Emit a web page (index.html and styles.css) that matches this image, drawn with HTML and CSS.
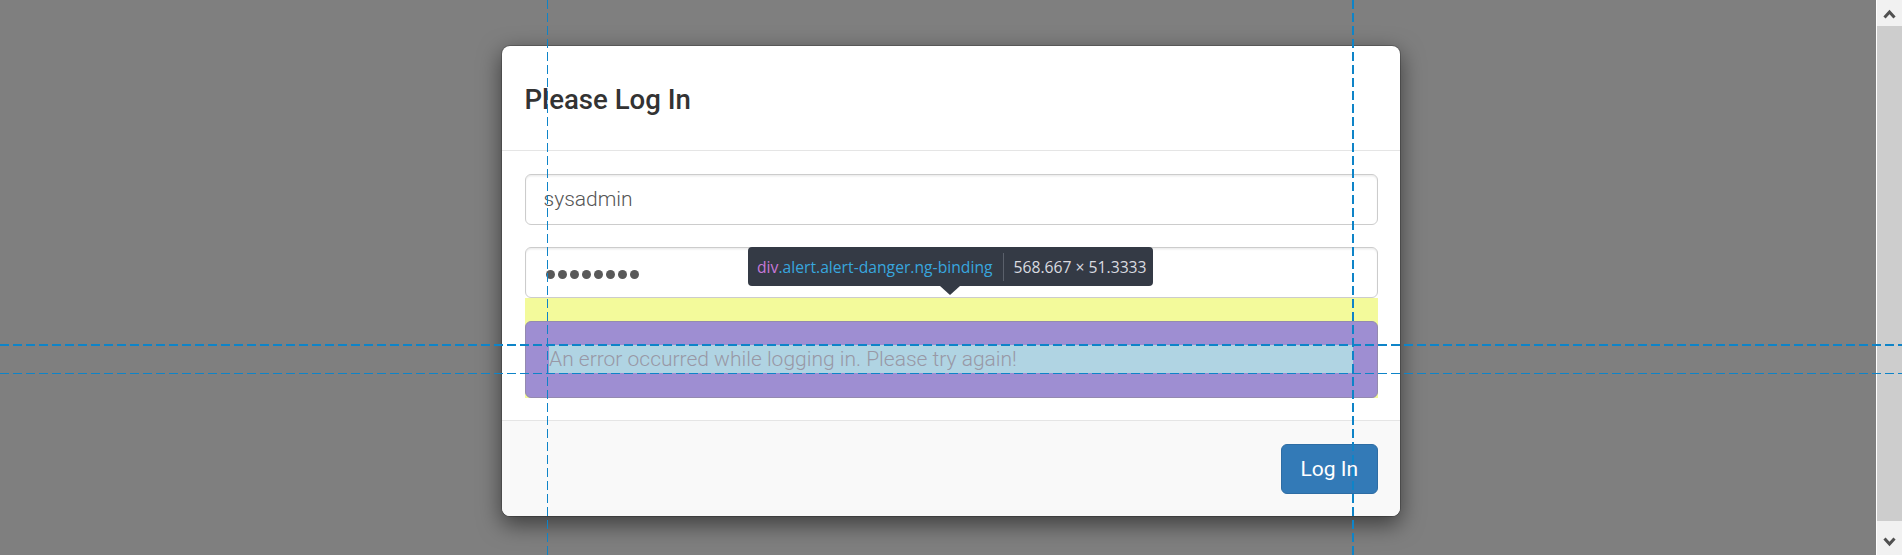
FILE: index.html
```html
<!DOCTYPE html>
<html lang="en">
<head>
<meta charset="utf-8">
<title>Please Log In</title>
<link rel="stylesheet" href="styles.css">
</head>
<body>
<div class="screen">
  <div class="viewport">
    <div class="modal">
      <div class="modal-header">
        <h4 class="modal-title">Please Log In</h4>
      </div>
      <div class="modal-body">
        <input class="form-control" type="text" value="sysadmin">
        <div class="form-control pw">
          <span class="dot"></span><span class="dot"></span><span class="dot"></span><span class="dot"></span><span class="dot"></span><span class="dot"></span><span class="dot"></span><span class="dot"></span>
        </div>
        <div class="alert-margin">
          <div class="alert">
            <div class="alert-content">An error occurred while logging in. Please try again!</div>
          </div>
        </div>
      </div>
      <div class="modal-footer">
        <button class="btn" type="button">Log In</button>
      </div>
    </div>
  </div>
  <div class="scrollbar">
    <div class="sb-btn sb-up">
      <svg width="25" height="26" viewBox="0 0 25 26"><polyline points="7.5,17.5 12.5,12 17.5,17.5" fill="none" stroke="#505050" stroke-width="3"/></svg>
    </div>
    <div class="sb-thumb"></div>
    <div class="sb-gap"></div>
    <div class="sb-btn sb-down">
      <svg width="25" height="26" viewBox="0 0 25 26"><polyline points="7.5,9.5 12.5,15 17.5,9.5" fill="none" stroke="#505050" stroke-width="3"/></svg>
    </div>
  </div>

  <div class="guide gv gv-left"></div>
  <div class="guide gv gv-right"></div>
  <div class="guide gh gh-top"></div>
  <div class="guide gh gh-bottom"></div>

  <div class="tooltip">
    <span class="tt-sel"><span class="tt-tag">div</span><span class="tt-cls">.alert.alert-danger.ng-binding</span></span>
    <span class="tt-sep"></span>
    <span class="tt-dim">568.667 × 51.3333</span>
    <span class="tt-arrow"></span>
  </div>
</div>
</body>
</html>
```

FILE: styles.css
```css
html, body {
  margin: 0;
  padding: 0;
}

.screen {
  position: relative;
  display: flex;
  width: 1902px;
  height: 555px;
  overflow: hidden;
  background: #7f7f7f;
  font-family: Roboto, "Liberation Sans", Arial, sans-serif;
}

.viewport {
  flex: 1;
}

.modal {
  box-sizing: border-box;
  width: 900px;
  margin: 45px 0 0 501px;
  background: #fff;
  background-clip: padding-box;
  border: 1px solid rgba(0, 0, 0, 0.2);
  border-radius: 9px;
  box-shadow: 0 7.5px 22.5px rgba(0, 0, 0, 0.5);
  overflow: hidden;
}

.modal-header {
  padding: 24px 22.5px 21px;
  border-bottom: 1px solid #e5e5e5;
}

.modal-title {
  margin: 0;
  font-size: 27.6px;
  line-height: 59px;
  font-weight: 500;
  color: #333;
}

.modal-body {
  padding: 22.5px;
}

.form-control {
  display: block;
  box-sizing: border-box;
  width: 100%;
  height: 51px;
  margin: 0 0 22.5px;
  padding: 0 18px;
  border: 1px solid #ccc;
  border-radius: 6px;
  background: #fff;
  box-shadow: inset 0 1.5px 1.5px rgba(0, 0, 0, 0.075);
  font-family: Roboto, "Liberation Sans", Arial, sans-serif;
  font-size: 21px;
  font-weight: 300;
  color: #555;
  outline: none;
}

.pw {
  display: flex;
  align-items: center;
  gap: 3px;
  margin-bottom: 0;
  padding-left: 20px;
}

.dot {
  width: 9px;
  height: 9px;
  margin-top: 3px;
  border-radius: 50%;
  background: #595959;
}

.alert-margin {
  padding-top: 22.5px;
  background: #f3fa9b;
}

.alert {
  padding: 23.5px;
  border: 1px solid #948ab0;
  border-radius: 6px;
  background: #9e8ed2;
}

.alert-content {
  background: #b0d4e3;
  font-size: 21px;
  line-height: 28px;
  font-weight: 300;
  color: #9898a6;
}

.modal-footer {
  display: flex;
  justify-content: flex-end;
  padding: 22.5px;
  border-top: 1px solid #e5e5e5;
  background: #f9f9f9;
}

.btn {
  box-sizing: border-box;
  height: 50px;
  padding: 0 18.5px;
  border: 1px solid #2e6da4;
  border-radius: 6px;
  background: #337ab7;
  color: #fff;
  font-family: Roboto, "Liberation Sans", Arial, sans-serif;
  font-size: 21px;
  font-weight: 400;
}

/* fake browser scrollbar */
.scrollbar {
  display: flex;
  flex-direction: column;
  width: 25px;
  border-left: 1px solid #fff;
  background: #f1f1f1;
}

.sb-btn {
  height: 26px;
  flex: none;
}

.sb-btn svg {
  display: block;
}

.sb-thumb {
  flex: 1;
  background: #cdcdcd;
}

.sb-gap {
  height: 8px;
  flex: none;
}

/* devtools guide lines */
.guide {
  position: absolute;
}

.gv {
  top: 0;
  height: 555px;
  background: repeating-linear-gradient(to bottom, #0e84c8 0 9px, transparent 9px 13px);
}

.gv-left {
  left: 547px;
  width: 1px;
}

.gv-right {
  left: 1352px;
  width: 2px;
}

.gh {
  left: 0;
  width: 1902px;
  background: repeating-linear-gradient(to right, #0e84c8 0 9px, transparent 9px 13px);
}

.gh-top {
  top: 344px;
  height: 2px;
}

.gh-bottom {
  top: 373px;
  height: 1px;
}

/* devtools inspect tooltip */
.tooltip {
  position: absolute;
  left: 748px;
  top: 247px;
  height: 39px;
  display: flex;
  align-items: center;
  gap: 10px;
  padding: 0 6px 0 9px;
  border-radius: 4px;
  background: #343a45;
  font-family: "Open Sans", "Noto Sans", sans-serif;
  font-size: 15.7px;
  white-space: nowrap;
}

.tt-tag {
  color: #c678d8;
}

.tt-cls {
  color: #38a6de;
}

.tt-sep {
  width: 1px;
  height: 28px;
  background: #5a606b;
}

.tt-dim {
  color: #d9dbe0;
}

.tt-arrow {
  position: absolute;
  left: 50%;
  bottom: -9px;
  margin-left: -10.5px;
  width: 0;
  height: 0;
  border-left: 10.5px solid transparent;
  border-right: 10.5px solid transparent;
  border-top: 9px solid #343a45;
}
```
